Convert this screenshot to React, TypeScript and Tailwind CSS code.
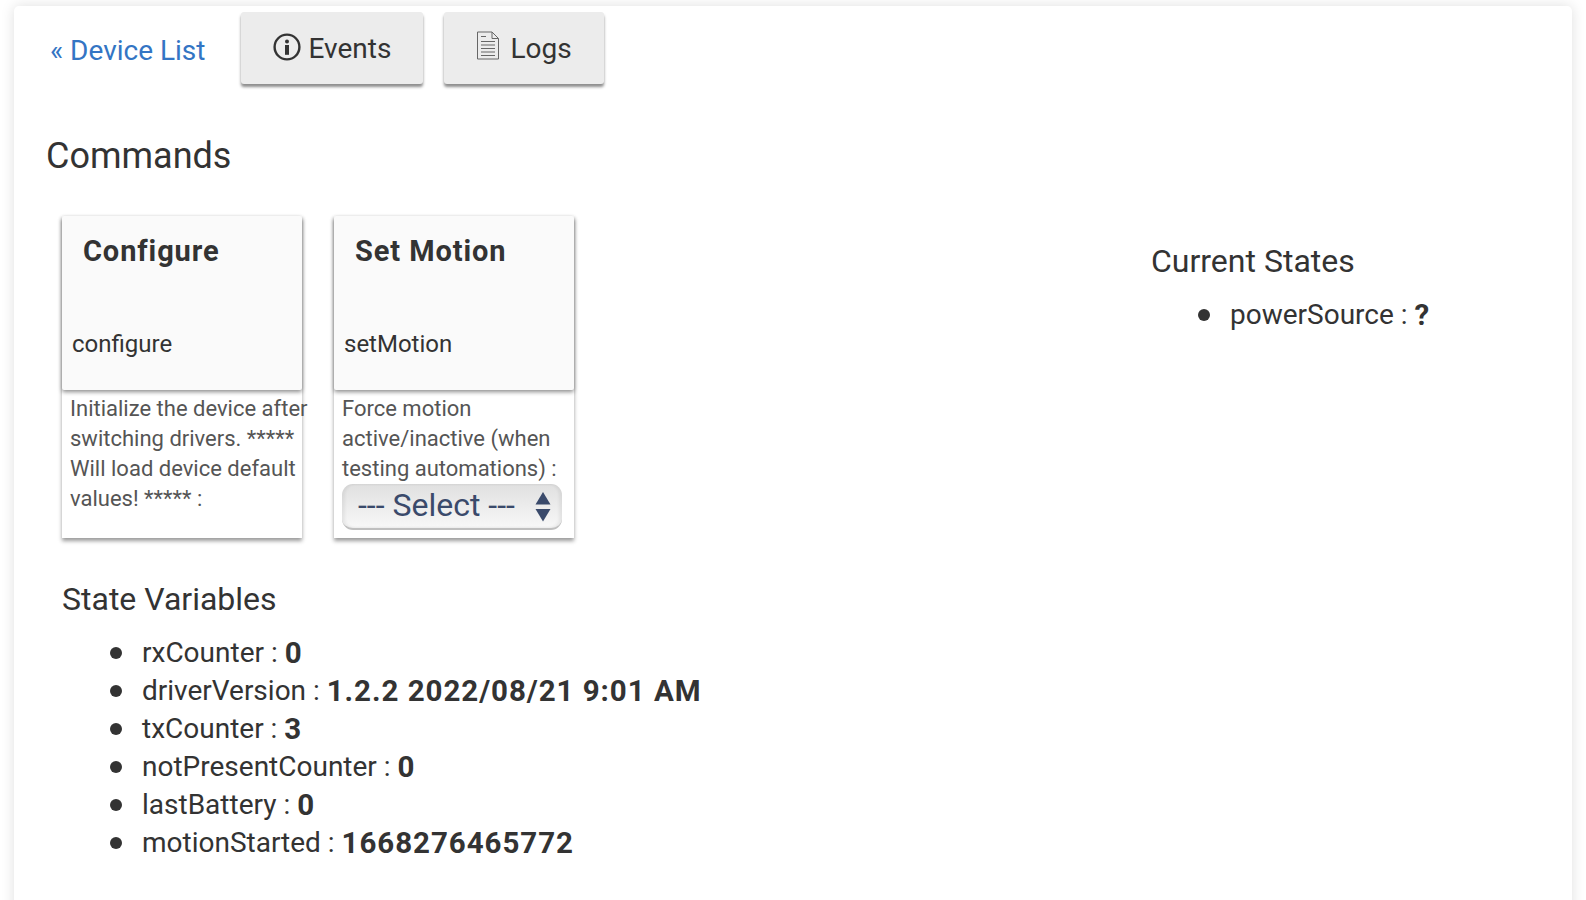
import React from "react";

const deviceStates = [
  { name: "rxCounter", value: "0" },
  { name: "driverVersion", value: "1.2.2 2022/08/21 9:01 AM" },
  { name: "txCounter", value: "3" },
  { name: "notPresentCounter", value: "0" },
  { name: "lastBattery", value: "0" },
  { name: "motionStarted", value: "1668276465772" },
];

function InfoIcon() {
  return (
    <svg className="mb-[4px]" width="28" height="28" viewBox="0 0 28 28" fill="none">
      <circle cx="14" cy="14" r="12.400" stroke="#333" strokeWidth="2.400" />
      <circle cx="14" cy="8.600" r="2" fill="#333" />
      <rect x="12" y="12" width="4" height="9.800" fill="#333" />
    </svg>
  );
}

function DocIcon() {
  return (
    <svg className="mb-[8px]" width="24" height="29" viewBox="0 0 24 29" fill="none" stroke="#666" strokeWidth="1">
      <path d="M1.500 1h14.500l6.500 6.500v20.500h-21z" />
      <path d="M16 1v6.500h6.500" />
      <path d="M5 5.500h5M5 10.500h14M5 14h14M5 17.500h14M5 21h14M5 24.500h14" />
    </svg>
  );
}

function CommandCard({ title, name, children }: { title: string; name: string; children: React.ReactNode }) {
  return (
    <div className="w-[240px] h-[322px] bg-white shadow-[0_3px_4px_rgba(0,0,0,0.4)]">
      <div className="h-[174px] bg-[#fafafa] rounded-[2px] shadow-[0_2px_4px_rgba(0,0,0,0.45)] flex flex-col">
        <div className="pl-[21px] pt-[16px] text-[29px] leading-[38px] font-bold tracking-[0.900px] text-[#333]">{title}</div>
        <div className="pl-[10px] mt-[55px] text-[24px] leading-[38px] text-[#333]">{name}</div>
      </div>
      <div className="pl-[8px] pt-[4px] text-[22px] leading-[30px] text-[#555]">{children}</div>
    </div>
  );
}

function StateList({ items, className }: { items: { name: string; value: string }[]; className: string }) {
  return (
    <ul className={className}>
      {items.map((item) => (
        <li key={item.name} className="flex items-center h-[38px] text-[28px] text-[#333] whitespace-pre">
          <span className="w-[12px] h-[12px] rounded-full bg-[#333] mr-[20px]" />
          <span>{item.name} : </span>
          <b className="text-[29.500px] font-bold tracking-[0.950px]">{item.value}</b>
        </li>
      ))}
    </ul>
  );
}

export default function App() {
  return (
    <div className="h-[900px] overflow-hidden bg-white px-[14px] pt-[6px] font-['Roboto',sans-serif]">
      <div className="h-[920px] bg-white rounded-[5px] shadow-[0_0_14px_rgba(0,0,0,0.13)] pl-[33px] pt-[6px]">
        <div className="flex items-center">
          <a className="ml-[3px] w-[191px] pt-[6px] text-[28px] text-[#3375c4]">« Device List</a>
          <button className="w-[182px] h-[72px] pt-[2px] bg-[#ececec] rounded-[3px] shadow-[0_3px_3px_rgba(0,0,0,0.45)] flex items-center justify-center gap-[8px] text-[28px] text-[#333]">
            <InfoIcon />
            Events
          </button>
          <button className="ml-[21px] w-[160px] h-[72px] pt-[2px] bg-[#ececec] rounded-[3px] shadow-[0_3px_3px_rgba(0,0,0,0.45)] flex items-center justify-center gap-[10px] text-[28px] text-[#333]">
            <DocIcon />
            Logs
          </button>
        </div>
        <h2 className="mt-[48px] -ml-[1px] text-[36px] leading-[48px] text-[#333]">Commands</h2>
        <div className="flex">
          <div className="w-[1104px] pl-[15px] pt-[36px]">
            <div className="flex gap-[32px]">
              <CommandCard title="Configure" name="configure">
                <span className="whitespace-nowrap">Initialize the device after</span>
                <br />
                switching drivers. *****
                <br />
                Will load device default
                <br />
                values! ***** :
              </CommandCard>
              <CommandCard title="Set Motion" name="setMotion">
                Force motion
                <br />
                active/inactive (when
                <br />
                testing automations) :
                <div className="w-[220px] h-[46px] rounded-[11px] bg-gradient-to-b from-[#e0e0e0] to-[#f8f8f8] border-b-2 border-[#bfbfbf] shadow-[inset_3px_0_3px_rgba(0,0,0,0.06),inset_-3px_0_3px_rgba(0,0,0,0.06)] flex items-center justify-between pl-[16px] pr-[10px] pb-[2px] text-[32px] text-[#3a4a6b]">
                  --- Select ---
                  <svg className="mt-[3px]" width="18" height="30" viewBox="0 0 18 30" fill="#3a4a6b">
                    <path d="M9 0l7.500 12.500h-15z" />
                    <path d="M1.500 17h15l-7.500 12.500z" />
                  </svg>
                </div>
              </CommandCard>
            </div>
            <h3 className="mt-[39px] text-[32px] leading-[44px] text-[#333]">State Variables</h3>
            <StateList items={deviceStates} className="mt-[13px] pl-[48px]" />
          </div>
          <div className="pt-[59px]">
            <h3 className="text-[32px] leading-[44px] text-[#333]">Current States</h3>
            <StateList items={[{ name: "powerSource", value: "?" }]} className="mt-[13px] pl-[47px]" />
          </div>
        </div>
      </div>
    </div>
  );
}
